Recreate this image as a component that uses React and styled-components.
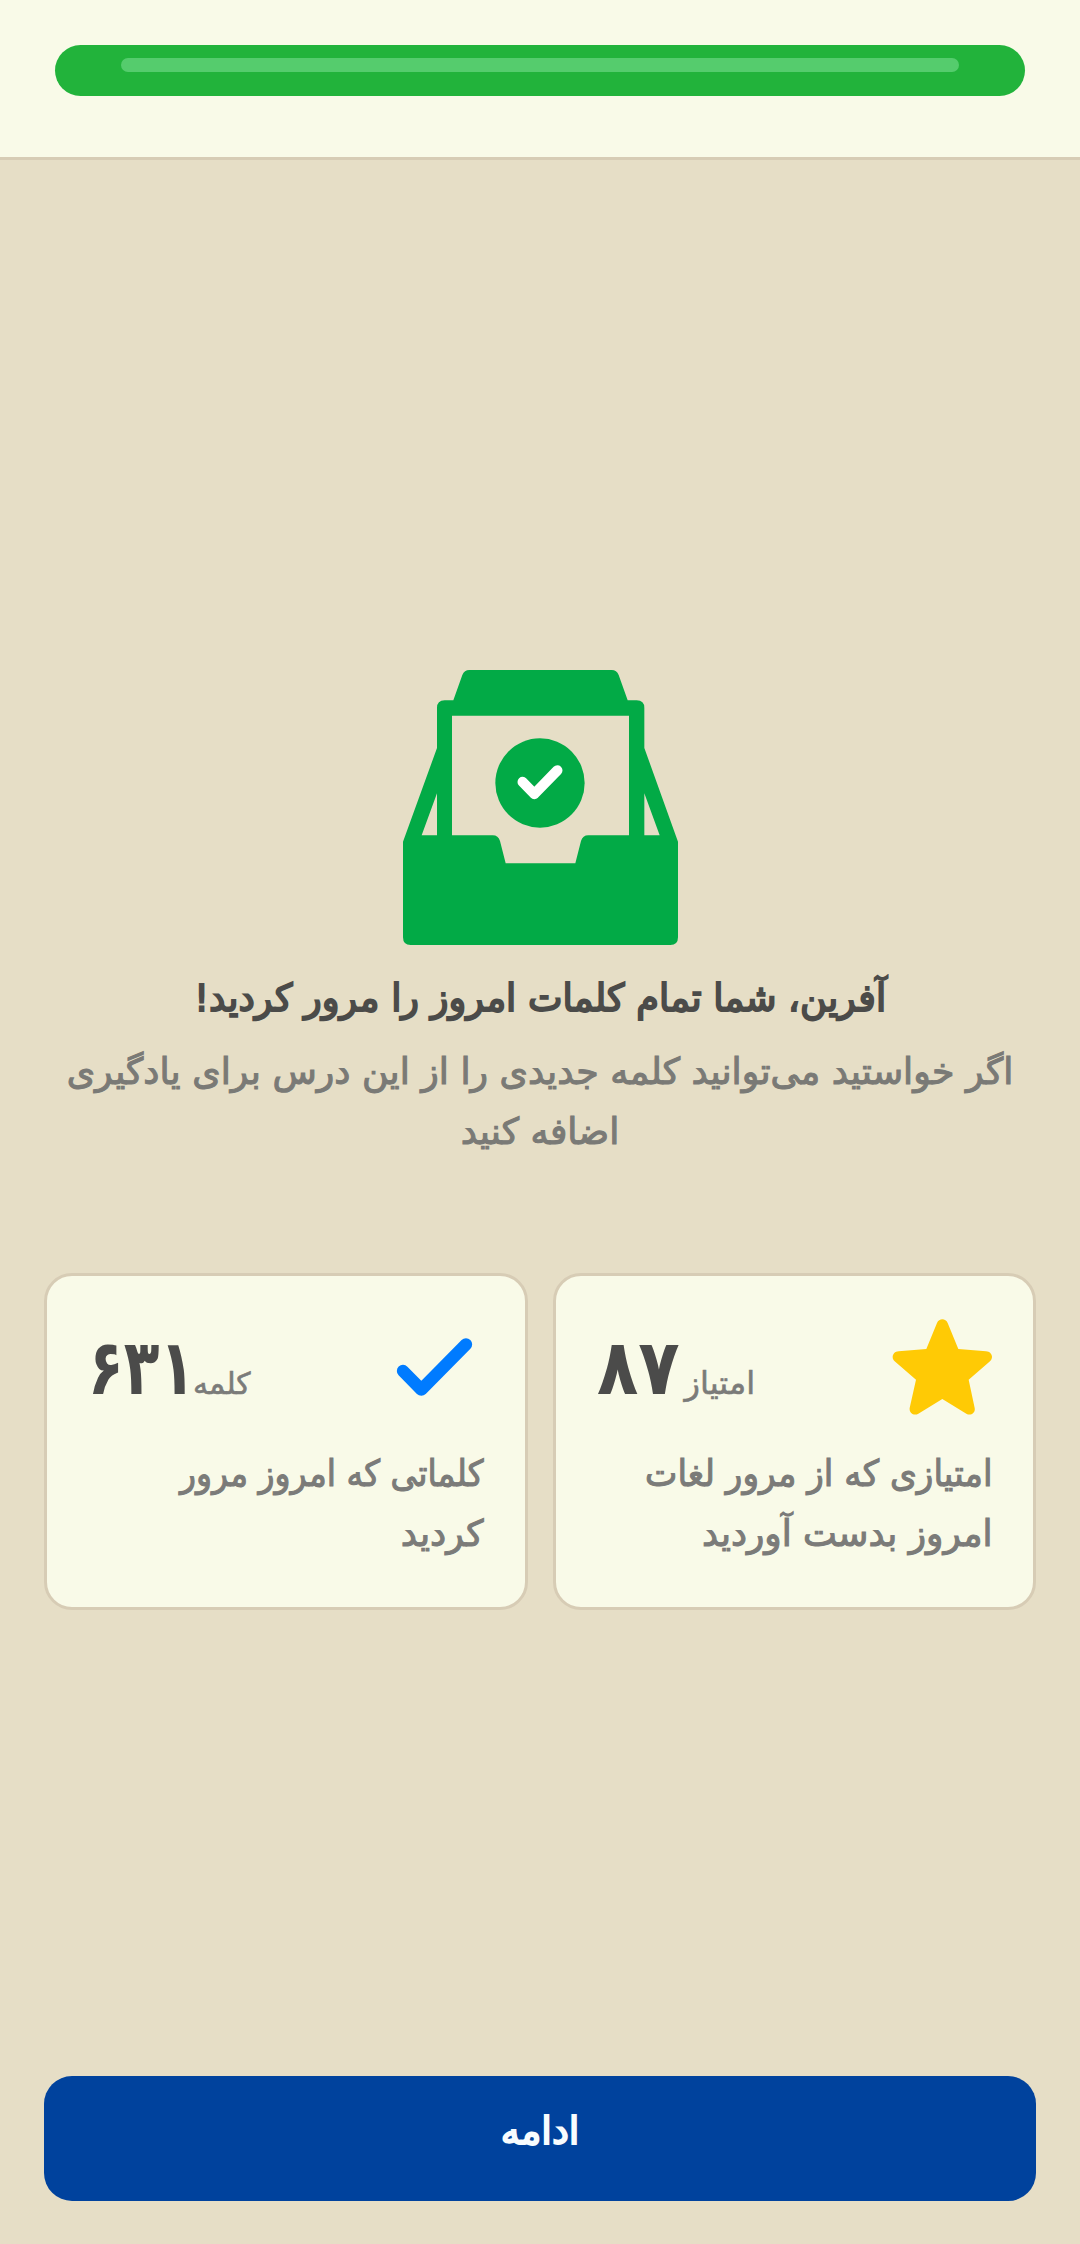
import styled, { createGlobalStyle } from "styled-components";

const GlobalStyle = createGlobalStyle`
  * {
    box-sizing: border-box;
  }
  body {
    margin: 0;
    background: #e6dec6;
    font-family: "DejaVu Sans", sans-serif;
  }
`;

const Page = styled.div`
  width: 1080px;
  height: 2244px;
  display: flex;
  flex-direction: column;
  background: #e6dec6;
  overflow: hidden;
`;

const Header = styled.header`
  height: 160px;
  padding: 45px 55px 0;
  background: #f9fae8;
  border-bottom: 3px solid #d7ccb5;
`;

const Progress = styled.div`
  height: 50.5px;
  padding: 13px 66px 0;
  border-radius: 26px;
  background: #22b33b;
`;

const Shine = styled.div`
  height: 14px;
  border-radius: 7px;
  background: #55cc6d;
`;

const Main = styled.main`
  flex: 1;
  display: flex;
  flex-direction: column;
  align-items: center;
  padding: 510px 44px 0;
`;

const Tray = styled.svg`
  width: 275px;
  height: 275px;
  flex: none;
`;

const Title = styled.h1`
  margin: 23px 0 0;
  height: 60px;
  line-height: 60px;
  font-size: 38px;
  font-weight: 400;
  white-space: nowrap;
  color: #4b4b49;
  -webkit-text-stroke: 1.9px #4b4b49;
  transform: scaleX(0.966);
`;

const Subtitle = styled.p`
  margin: 14px 0 0;
  text-align: center;
  color: #7a7a76;
  -webkit-text-stroke: 1.1px #7a7a76;
`;

const Line = styled.span`
  display: block;
  height: 60px;
  line-height: 60px;
  font-size: 36.3px;
  white-space: nowrap;
  transform: scaleX(${({ $stretch }) => $stretch || 1});
  transform-origin: right center;
`;

const Cards = styled.div`
  display: flex;
  gap: 25px;
  width: 992px;
  margin-top: 111px;
`;

const Card = styled.section`
  flex: 1;
  height: 337px;
  padding: 41px;
  border: 3px solid #d7ccb5;
  border-radius: 28px;
  background: #f9fae8;
`;

const CardTop = styled.div`
  display: flex;
  justify-content: space-between;
  height: 100px;
`;

const CardIcon = styled.svg`
  width: 100px;
  height: 100px;
  flex: none;
`;

const Score = styled.div`
  display: flex;
  align-items: baseline;
  gap: 5px;
  height: 100px;
  margin-top: 1px;
  line-height: 100px;
`;

const Unit = styled.span`
  font-size: ${({ $size }) => $size}px;
  color: #7b7b79;
  -webkit-text-stroke: 0.6px #7b7b79;
`;

const Value = styled.span`
  font-size: 77px;
  font-weight: 700;
  color: #4b4b4a;
  transform: scaleX(${({ $stretch }) => $stretch});
  transform-origin: left center;
  white-space: nowrap;
`;

// the scale is anchored on the box, so the box keeps the drawn width
const ValueBox = styled.span`
  display: flex;
  direction: ltr;
  width: ${({ $width }) => $width}px;
`;

const Description = styled.p`
  margin: 27px 0 0;
  color: #7b7b79;
  -webkit-text-stroke: 1.1px #7b7b79;
`;

const Footer = styled.footer`
  padding: 0 44px 43px;
`;

const Button = styled.button`
  display: flex;
  justify-content: center;
  width: 100%;
  height: 125px;
  padding: 25px 0 0;
  border: none;
  border-radius: 28px;
  background: #00429d;
  color: #f8fcff;
  font-family: inherit;
  font-size: 38px;
  font-weight: 400;
  line-height: 60px;
  -webkit-text-stroke: 1.9px #f8fcff;
`;

const TrayIcon = () => (
  <Tray viewBox="39 60 825 825">
    <path
      fill="#02aa46"
      fillRule="evenodd"
      d="M238 60H665Q680 60 686 75L713 151H740Q763 151 763 174V294L864 575V862Q864 885 841 885H62Q39 885 39 862V575L141 294V174Q141 151 164 151H190L217 75Q223 60 238 60ZM186 197V556H308Q325 556 330 573L347 640H556L573 573Q578 556 595 556H717V197ZM141 430L95 556H141ZM763 430V556H809Z"
    />
    <circle cx="450" cy="399" r="134" fill="#02aa46" />
    <path
      d="M398 396L433 432L502 361"
      fill="none"
      stroke="#fff"
      strokeWidth="31"
      strokeLinecap="round"
      strokeLinejoin="round"
    />
  </Tray>
);

const StarIcon = () => (
  <CardIcon viewBox="1057 170 300 300">
    <path
      fill="#ffca05"
      d="M1192 188C1198 173 1218 173 1224 188L1256 266L1339 272.500C1356 273 1363 292 1351 303L1287 358L1305 443C1308 458 1293 468 1280 460L1208 416L1136 460C1123 468 1108 458 1110 443L1129 358L1065 303C1053 292 1060 273 1077 272.500L1160 266Z"
    />
  </CardIcon>
);

const CheckIcon = () => (
  <CardIcon viewBox="1062 170 300 300">
    <path
      d="M1119 332L1174 388L1308 252"
      fill="none"
      stroke="#007bff"
      strokeWidth="37"
      strokeLinecap="round"
      strokeLinejoin="round"
    />
  </CardIcon>
);

const stats = [
  {
    id: "points",
    icon: StarIcon,
    unit: "امتیاز",
    unitSize: 32,
    value: "۸۷",
    width: 83,
    stretch: 0.88,
    lines: [
      { text: "امتیازی که از مرور لغات", stretch: 0.946 },
      { text: "امروز بدست آوردید", stretch: 0.99 },
    ],
  },
  {
    id: "words",
    icon: CheckIcon,
    unit: "کلمه",
    unitSize: 30,
    value: "۶۳۱",
    width: 100,
    stretch: 0.76,
    lines: [
      { text: "کلماتی که امروز مرور", stretch: 0.914 },
      { text: "کردید", stretch: 1 },
    ],
  },
];

const App = () => {
  return (
    <Page dir="rtl" lang="fa">
      <GlobalStyle />
      <Header>
        <Progress>
          <Shine />
        </Progress>
      </Header>
      <Main>
        <TrayIcon />
        <Title>آفرین، شما تمام کلمات امروز را مرور کردید!</Title>
        <Subtitle>
          <Line>اگر خواستید می‌توانید کلمه جدیدی را از این درس برای یادگیری</Line>
          <Line>اضافه کنید</Line>
        </Subtitle>
        <Cards>
          {stats.map(({ id, icon: Icon, unit, unitSize, value, width, stretch, lines }) => (
            <Card key={id}>
              <CardTop>
                <Icon />
                <Score>
                  <Unit $size={unitSize}>{unit}</Unit>
                  <ValueBox $width={width}>
                    <Value $stretch={stretch}>{value}</Value>
                  </ValueBox>
                </Score>
              </CardTop>
              <Description>
                {lines.map((line) => (
                  <Line key={line.text} $stretch={line.stretch}>
                    {line.text}
                  </Line>
                ))}
              </Description>
            </Card>
          ))}
        </Cards>
      </Main>
      <Footer>
        <Button>ادامه</Button>
      </Footer>
    </Page>
  );
};

export default App;
